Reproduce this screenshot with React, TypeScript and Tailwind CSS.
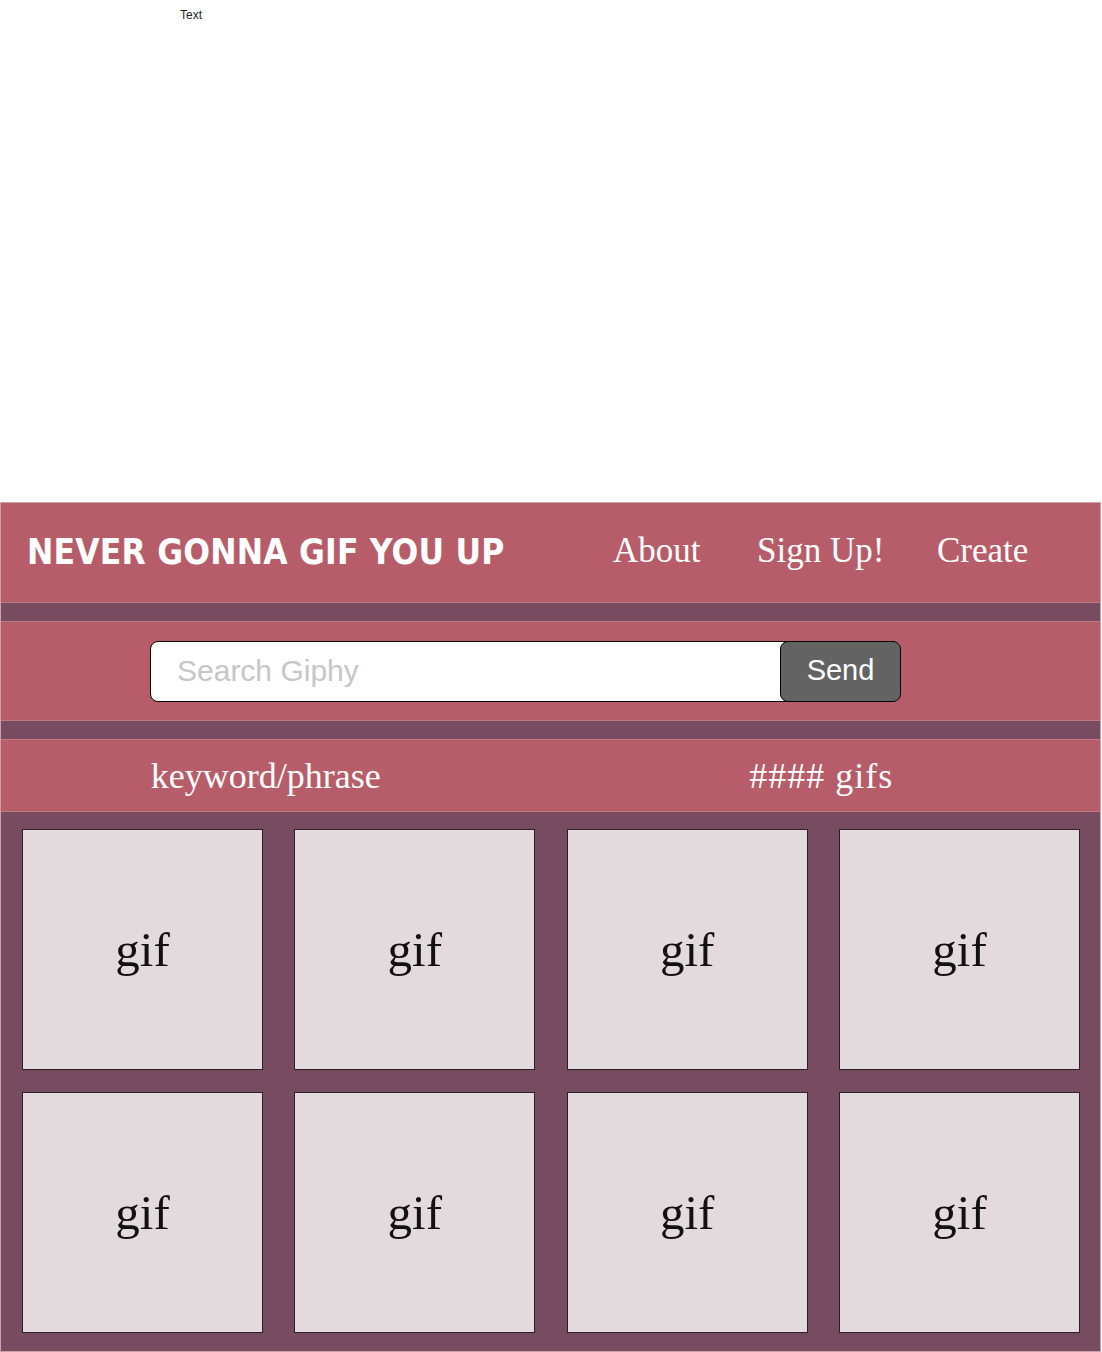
import React from 'react';

const serif = "font-['Liberation_Serif','Times_New_Roman',serif]";
const sans = "font-['Liberation_Sans',Arial,sans-serif]";

const GifTile: React.FC = () => (
  <div className="w-[241px] h-[241px] bg-[#e3dadd] border border-[#2a2026] flex items-center justify-center">
    <span className={`${serif} text-[49px] leading-none text-[#111]`}>gif</span>
  </div>
);

export default function App() {
  return (
    <div className="w-[1102px] bg-white">
      {/* top placeholder area */}
      <div className="h-[502px] pl-[180px] pt-[1px]">
        <span className={`${sans} text-[12px] text-[#222]`}>Text</span>
      </div>

      <div className="w-[1101px] border border-[#c7a2a7] bg-[#774c60]">
        {/* header */}
        <header className="h-[100px] bg-[#b75d69] border-b border-[#c07a84] flex items-center">
          <h1 className="pl-[26px] w-[612px] font-['DejaVu_Sans',Verdana,sans-serif] font-stretch-condensed font-bold text-[35px] tracking-[0.2px] leading-none text-white">
            NEVER GONNA GIF YOU UP
          </h1>
          <nav className={`${serif} flex text-[35px] leading-none text-white -mt-[5px]`}>
            <a className="w-[144px]">About</a>
            <a className="w-[180px]">Sign Up!</a>
            <a>Create</a>
          </nav>
        </header>

        <div className="h-[18px]" />

        {/* search */}
        <div className="h-[100px] bg-[#b75d69] border-y border-[#c07a84] flex items-center pl-[149px]">
          <div className="flex h-[61px]">
            <input
              className={`${sans} w-[640px] h-full bg-white border border-black rounded-l-[8px] pl-[26px] text-[30px] outline-none placeholder:text-[#c6c6c6]`}
              placeholder="Search Giphy"
            />
            <button className={`${sans} -ml-[10px] w-[121px] h-full bg-[#636363] border border-black rounded-[8px] text-[29px] text-white`}>
              Send
            </button>
          </div>
        </div>

        <div className="h-[18px]" />

        {/* result info */}
        <div className={`${serif} h-[73px] bg-[#b75d69] border-y border-[#c07a84] grid grid-cols-2 items-center text-[36px] text-white`}>
          <div className="text-center pr-[20px]">keyword/phrase</div>
          <div className="text-center pr-[8px] tracking-[1px]">#### gifs</div>
        </div>

        {/* gif grid */}
        <div className="pl-[21px] pr-[20px] pt-[17px] pb-[18px] flex flex-col gap-[22px]">
          {[0, 1].map((r) => (
            <div key={r} className="flex justify-between">
              {[0, 1, 2, 3].map((c) => (
                <GifTile key={c} />
              ))}
            </div>
          ))}
        </div>
      </div>
    </div>
  );
}
